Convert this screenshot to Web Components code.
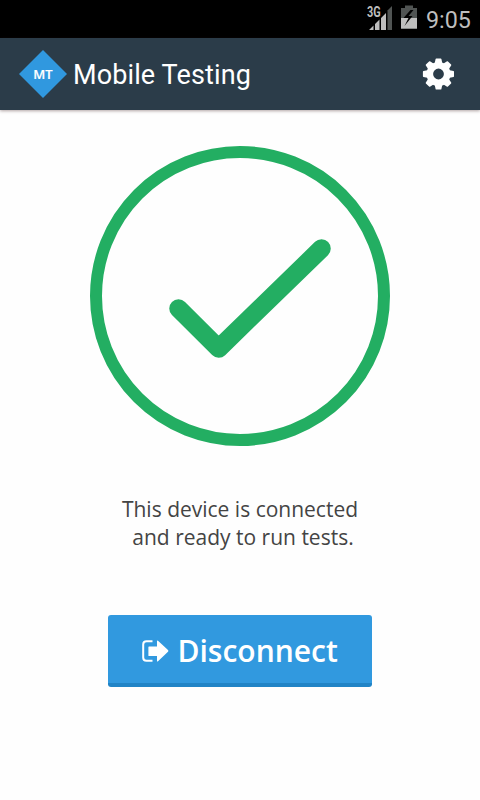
<!DOCTYPE html>
<html lang="en"><head><meta charset="utf-8"><title>Mobile Testing</title>
<style>html,body{margin:0;height:100%;background:#fefefe}body{overflow:hidden}</style></head>
<body><mobile-app></mobile-app>
<script>
const define = (name, html) => customElements.define(name, class extends HTMLElement {
  constructor() { super(); this.attachShadow({mode: 'open'}).innerHTML = html; }
});

define('status-bar', `<style>
:host{display:flex;height:38px;background:#000;justify-content:flex-end;box-sizing:border-box;padding-right:9px;color:#bebebe;font:24px/38px Roboto,sans-serif}
svg{display:block;flex:none}
.signal{display:grid;margin-right:-1px}.signal>*{grid-area:1/1}
.net{font:bold 14px/14px Roboto,sans-serif;padding-top:5px;white-space:nowrap;transform:scaleX(.78);transform-origin:0 0;text-shadow:0 0 1px #000}
time{width:45px;margin-left:8px;white-space:nowrap;padding-top:1px;transform:scaleX(.97);transform-origin:0 0}
</style>
<div class="signal"><svg width="26" height="38"><path fill="#505453" d="M20.500 10.500 25 6v24h-4.500z"/><path fill="#bebebe" d="M2 30l4.500-4.500V30zM8 24l4.500-4.500V30H8zM14 18l5-5V30h-5z"/></svg><span class="net">3G</span></div>
<svg width="26" height="38"><path fill="#505453" d="M13 5.500h8V8h4v21H9V8h4z"/><path fill="#bebebe" d="M9 18h16v10.500H9z"/><path fill="#000" d="M18.500 10l-7 8h5l-4 8 8-10h-4l5-6z"/></svg>
<time>9:05</time>`);

define('brand-mark', `<style>
:host{display:grid;place-items:center;width:48px;height:48px;color:#fff;font:600 13px/1 "Open Sans",sans-serif}
svg,span{grid-area:1/1}span{-webkit-text-stroke:.2px #fff;transform:translateY(-.5px)}
</style><svg width="48" height="48"><path fill="#3098df" d="M24 0 48 24 24 48 0 24z"/></svg><span><slot></slot></span>`);

define('settings-icon', `<style>:host{display:block}svg{display:block}</style>
<svg width="32" height="32" viewBox="-16.500 -16 32 32" fill="#fff"><defs><path id="t" d="M-4-10-2.900-15Q-2.800-15.600-2.200-15.600H2.200Q2.800-15.600 2.900-15L4-10z"/></defs>
<circle r="8.700" fill="none" stroke="#fff" stroke-width="6.600"/>
${[0,45,90,135,180,225,270,315].map(a => `<use href="#t" transform="rotate(${a})"/>`).join('')}</svg>`);

define('app-header', `<style>
:host{display:flex;align-items:center;height:72px;box-sizing:border-box;background:#2b3c49;padding:0 26px 0 19px;box-shadow:0 1px 3px rgba(60,30,30,.4);color:#fff;position:relative}
h1{margin:0 auto 0 6px;padding-top:2px;font:400 27px/70px Roboto,sans-serif;letter-spacing:.12px;white-space:nowrap}
</style><brand-mark>MT</brand-mark><h1><slot></slot></h1><settings-icon></settings-icon>`);

define('success-mark', `<style>:host{display:block}svg{display:block}</style>
<svg width="300" height="300" fill="none" stroke="#23ae62"><circle cx="150" cy="150" r="144" stroke-width="12"/><path d="M88.500 162.500 128.700 202.500 231.500 102.500" stroke-width="18.500" stroke-linecap="round" stroke-linejoin="round"/></svg>`);

define('action-button', `<style>
:host{display:block}
button{display:flex;align-items:center;width:264px;height:72px;border:0;border-bottom:4px solid #2184c6;border-radius:3px;background:#3199df;color:#fff;padding:4px 0 0 34px;font:600 30px/68px "Open Sans",sans-serif;box-sizing:border-box}
svg{flex:none;margin-right:8.500px}span{white-space:nowrap}
</style><button><svg width="27" height="24"><path d="M10.500 2.200H4.500Q1.200 2.200 1.200 5.500V18.500Q1.200 21.800 4.500 21.800H10.500" fill="none" stroke="#fff" stroke-width="2"/><path d="M7 7.500h8V2.200q0-1.200 1-.4L26 11q.8.900 0 1.800l-10 9.500q-1 .8-1-.4V17H7q-.6 0-.6-.6V8.100Q6.400 7.500 7 7.500z" fill="#fff"/></svg><span><slot></slot></span></button>`);

define('mobile-app', `<style>
:host{display:flex;flex-direction:column;width:480px;height:800px;background:#fefefe}
main{display:flex;flex-direction:column;align-items:center;padding-top:36px}
p{margin:49px 0 64px;text-align:center;color:#444;font:21px/28px "Open Sans",sans-serif;white-space:nowrap}
p span{display:block}p span+span{padding-left:6px}
</style><status-bar></status-bar><app-header>Mobile Testing</app-header>
<main><success-mark></success-mark><p><span>This device is connected</span><span>and ready to run tests.</span></p><action-button>Disconnect</action-button></main>`);
</script></body></html>
